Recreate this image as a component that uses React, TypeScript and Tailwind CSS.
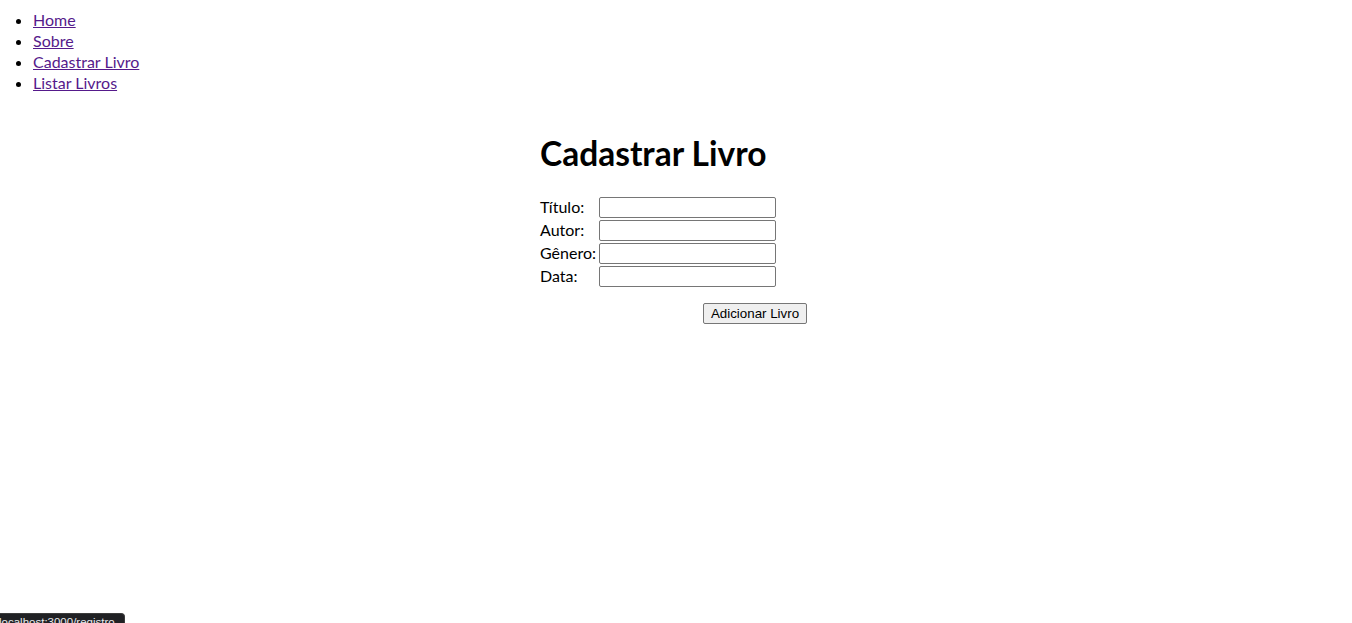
import React, { useState } from 'react';

const links = ['Home', 'Sobre', 'Cadastrar Livro', 'Listar Livros'];

const fields = [
  { id: 'titulo', label: 'Título:' },
  { id: 'autor', label: 'Autor:' },
  { id: 'genero', label: 'Gênero:' },
  { id: 'data', label: 'Data:' },
];

const App = () => {
  const [values, setValues] = useState<Record<string, string>>({});

  return (
    <div className="relative min-h-[623px] bg-white text-black font-['Lato','Noto_Sans',sans-serif] text-[16px]">
      {/* Nav */}
      <ul className="list-disc pl-[33px] pt-[9px] leading-[21px]">
        {links.map((l) => (
          <li key={l}>
            <a href="#" className="text-[#551a8b] underline">
              {l}
            </a>
          </li>
        ))}
      </ul>

      {/* Form */}
      <div className="flex justify-center pt-[39px]">
        <div className="w-[272px]">
          <h1 className="text-[33.5px] font-bold leading-[42px] mb-[22px]">Cadastrar Livro</h1>
          <table className="border-separate border-spacing-0 -ml-[1px]">
            <tbody>
              {fields.map((f) => (
                <tr key={f.id}>
                  <td className="pl-[1px] pr-[2px] pt-0 pb-[2px] leading-[21px] align-middle">
                    <label htmlFor={f.id}>{f.label}</label>
                  </td>
                  <td className="p-[1px]">
                    <input
                      id={f.id}
                      value={values[f.id] ?? ''}
                      onChange={(e) => setValues({ ...values, [f.id]: e.target.value })}
                      className="block w-[177px] h-[21px] border border-[#767676] rounded-[2px] bg-white px-[2px] text-[13px]"
                    />
                  </td>
                </tr>
              ))}
            </tbody>
          </table>
          <div className="flex justify-end mt-[15px] pr-[5px]">
            <button
              type="button"
              className="h-[21px] w-[104px] border border-[#767676] rounded-[2px] bg-[#efefef] text-[13.33px] font-['Liberation_Sans',Arial,sans-serif] leading-none"
            >
              Adicionar Livro
            </button>
          </div>
        </div>
      </div>

      {/* Status bar */}
      <div className="absolute left-0 bottom-0 w-[125px] h-[10px] overflow-hidden rounded-tr-[4px] bg-[#202124] border-t border-r border-[#3c3c3c]">
        <span className="block -ml-[1px] mt-[1px] text-[11.5px] leading-[14px] text-[#e8eaed] whitespace-nowrap font-['Liberation_Sans',Arial,sans-serif]">
          localhost:3000/registro
        </span>
      </div>
    </div>
  );
};

export default App;
